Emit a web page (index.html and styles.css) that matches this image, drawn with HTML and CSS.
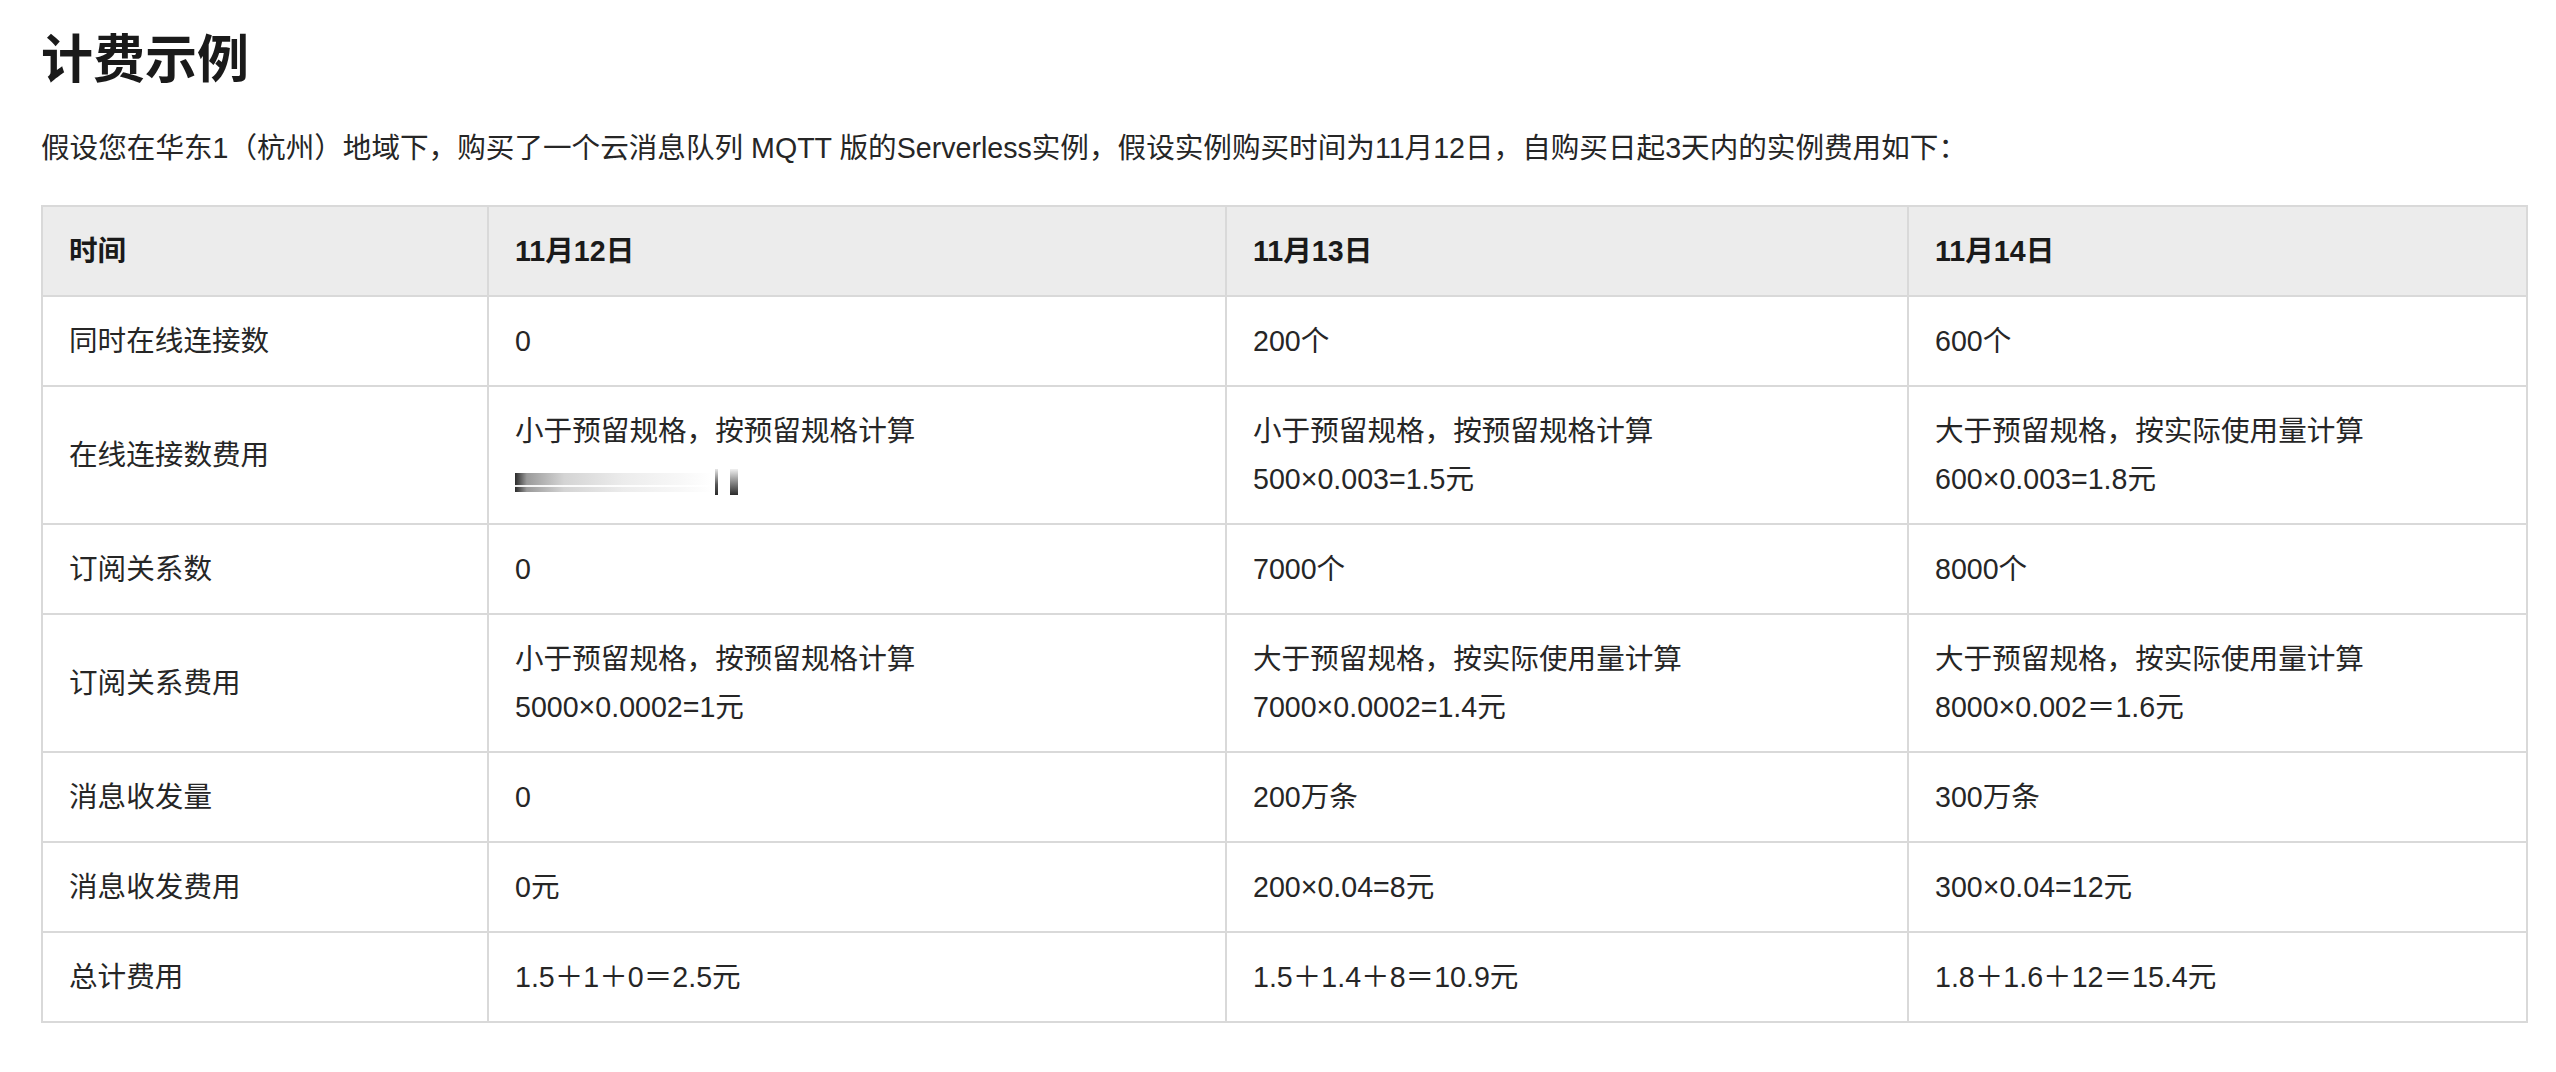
FILE: index.html
```html
<!DOCTYPE html>
<html lang="zh-CN">
<head>
    <meta charset="utf-8">
    <meta name="viewport" content="width=device-width, initial-scale=1.0">
    <title>计费示例</title>
    <link rel="stylesheet" href="styles.css">
</head>

<body>
    <div class="doc">
        <h1 class="title">计费示例</h1>
        <p class="intro">假设您在华东1（杭州）地域下，购买了一个云消息队列 MQTT 版的Serverless实例，假设实例购买时间为11月12日，自购买日起3天内的实例费用如下：</p>

        <table class="price">
            <colgroup>
                <col class="c1">
                <col class="c2">
                <col class="c3">
                <col class="c4">
            </colgroup>
            <thead>
                <tr>
                    <th>时间</th>
                    <th>11月12日</th>
                    <th>11月13日</th>
                    <th>11月14日</th>
                </tr>
            </thead>
            <tbody>
                <tr>
                    <td>同时在线连接数</td>
                    <td>0</td>
                    <td>200个</td>
                    <td>600个</td>
                </tr>
                <tr>
                    <td>在线连接数费用</td>
                    <td>小于预留规格，按预留规格计算<br><span class="blur"><span class="blur-bar"></span><span class="blur-tick"></span><span class="blur-tick wide"></span></span></td>
                    <td>小于预留规格，按预留规格计算<br>500×0.003=1.5元</td>
                    <td>大于预留规格，按实际使用量计算<br>600×0.003=1.8元</td>
                </tr>
                <tr>
                    <td>订阅关系数</td>
                    <td>0</td>
                    <td>7000个</td>
                    <td>8000个</td>
                </tr>
                <tr>
                    <td>订阅关系费用</td>
                    <td>小于预留规格，按预留规格计算<br>5000×0.0002=1元</td>
                    <td>大于预留规格，按实际使用量计算<br>7000×0.0002=1.4元</td>
                    <td>大于预留规格，按实际使用量计算<br>8000×0.002＝1.6元</td>
                </tr>
                <tr>
                    <td>消息收发量</td>
                    <td>0</td>
                    <td>200万条</td>
                    <td>300万条</td>
                </tr>
                <tr>
                    <td>消息收发费用</td>
                    <td>0元</td>
                    <td>200×0.04=8元</td>
                    <td>300×0.04=12元</td>
                </tr>
                <tr>
                    <td>总计费用</td>
                    <td>1.5＋1＋0＝2.5元</td>
                    <td>1.5＋1.4＋8＝10.9元</td>
                    <td>1.8＋1.6＋12＝15.4元</td>
                </tr>
            </tbody>
        </table>
    </div>
</body>
</html>
```

FILE: styles.css
```css
body {
    margin: 0;
    padding: 0 30px 0 41px;
    background-color: #ffffff;
    color: #262626;
    font-family: "Liberation Sans", "Noto Sans CJK SC", sans-serif;
}

.title {
    margin: 24px 0 0 0;
    font-size: 52px;
    line-height: 72px;
    font-weight: bold;
    color: #1a1a1a;
}

.intro {
    margin: 28px 0 33px 0;
    font-size: 28.6px;
    line-height: 48px;
}

.price {
    width: 2485px;
    table-layout: fixed;
    border-collapse: collapse;
    border: 2px solid #d9d9d9;
    font-size: 28.6px;
    line-height: 48px;
}

.c1 { width: 446px; }
.c2 { width: 738px; }
.c3 { width: 682px; }
.c4 { width: 619px; }

.price th,
.price td {
    border: 2px solid #d9d9d9;
    padding: 20px 26px;
    text-align: left;
    vertical-align: middle;
}

.price th {
    background-color: #ececec;
    font-weight: bold;
    color: #1a1a1a;
}

/* blurred value in the 11月12日 column */
.blur {
    display: inline-flex;
    align-items: flex-end;
    gap: 3px;
    height: 27px;
    vertical-align: middle;
}

.blur-bar {
    width: 197px;
    height: 19px;
    margin-bottom: 3px;
    background:
        linear-gradient(to bottom, transparent 0, transparent 62%, rgba(255, 255, 255, 0.9) 62%, rgba(255, 255, 255, 0.9) 74%, transparent 74%),
        linear-gradient(to right, #2a2a2a 0, #9a9a9a 6%, #d4d4d4 25%, #ececec 55%, #f8f8f8 85%, #ffffff 100%);
}

.blur-tick {
    width: 3px;
    height: 26px;
    background: linear-gradient(to bottom, #e6e6e6, #555555 60%, #2a2a2a);
}

.blur-tick.wide {
    width: 8px;
    margin-left: 9px;
    background: linear-gradient(to bottom, #f0f0f0, #8a8a8a 50%, #2a2a2a);
}
```
